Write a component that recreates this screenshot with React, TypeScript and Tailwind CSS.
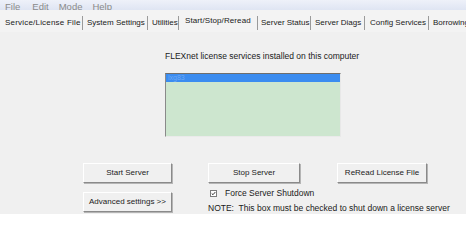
import React from "react"

const menus = [
  { label: "File", ml: "ml-[5px]" },
  { label: "Edit", ml: "ml-[12px]" },
  { label: "Mode", ml: "ml-[10px]" },
  { label: "Help", ml: "ml-[10px]" },
]

// widths measured from separator to separator
const tabs = [
  { label: "Service/License File", cls: "w-[77px] tracking-[0.2px]" },
  { label: "System Settings", cls: "w-[64px] pl-[4px]" },
  { label: "Utilities", cls: "w-[30px] pl-[4px]" },
  { label: "Start/Stop/Reread", cls: "w-[78px] pl-[6px] -mt-[3px] tracking-[0.1px]" },
  { label: "Server Status", cls: "w-[52px] pl-[3px]" },
  { label: "Server Diags", cls: "w-[53px] pl-[4px]" },
  { label: "Config Services", cls: "w-[63px] pl-[5px]" },
  { label: "Borrowing", cls: "pl-[4px]" },
]

function WinButton({ label, className = "" }: { label: string; className?: string }) {
  return (
    <button
      className={`h-[20px] bg-[#f0f0f0] border border-t-white border-l-white border-r-[#8a8a8a] border-b-[#8a8a8a] shadow-[1px_1px_0_#b5b5b5] text-[8px] text-[#222] flex items-center justify-center ${className}`}
    >
      {label}
    </button>
  )
}

export default function App() {
  return (
    <div
      className="w-[466px] h-[214px] overflow-hidden bg-[#f0f0f0] text-[#1a1a1a]"
      style={{ fontFamily: '"Liberation Sans", Arial, sans-serif' }}
    >
      {/* menu bar, top is cut off in the shot */}
      <div className="h-[10px] bg-gradient-to-b from-[#eef1f9] to-[#dfe5f3] flex items-end overflow-hidden">
        {menus.map((m) => (
          <span key={m.label} className={`${m.ml} text-[9.5px] leading-[10px] text-[#8a8a8a] -mb-[2px]`}>
            {m.label}
          </span>
        ))}
      </div>

      {/* tab strip */}
      <div className="h-[22px] pt-[3px] flex items-center pl-[5px] text-[8px] whitespace-nowrap bg-[#f3f3f3] overflow-hidden">
        {tabs.map((t, i) => (
          <React.Fragment key={t.label}>
            <span className={`shrink-0 ${t.cls}`}>{t.label}</span>
            {i < tabs.length - 1 && <span className="inline-block shrink-0 w-px h-[14px] bg-[#9a9a9a]" />}
          </React.Fragment>
        ))}
      </div>

      {/* content */}
      <div className="flex flex-col">
        <div className="pl-[165px] mt-[19px] text-[8.5px] leading-[10px]">
          FLEXnet license services installed on this computer
        </div>

        <div className="ml-[165px] mt-[12px] w-[176px] h-[64px] bg-[#cde6cf] border-t border-t-[#6e6e6e] border-l border-l-[#8a8a8a] border-r border-r-[#e8e8e8] border-b border-b-[#eaeaea]">
          <div className="h-[8px] bg-[#3b8cf0] text-[7px] leading-[8px] text-[#6fa8f3] pl-[2px]">lxg83</div>
        </div>

        <div className="flex mt-[26px] pl-[83px]">
          <WinButton label="Start Server" className="w-[89px]" />
          <WinButton label="Stop Server" className="w-[92px] ml-[36px]" />
          <WinButton label="ReRead License File" className="w-[90px] ml-[37px]" />
        </div>

        <div className="flex mt-[9px] pl-[83px]">
          <WinButton label="Advanced settings >>" className="w-[89px]" />
          <div className="ml-[36px] -mt-[4px] flex flex-col text-[8.5px] leading-[10px]">
            <div className="flex items-center">
              <span className="w-[7px] h-[7px] border border-[#7a7a7a] bg-white flex items-center justify-center ml-[2px]">
                <svg viewBox="0 0 7 7" className="w-[7px] h-[7px]">
                  <path d="M1 3.5 L2.8 5.2 L6 1.5" stroke="#222" strokeWidth="1.3" fill="none" />
                </svg>
              </span>
              <span className="ml-[8px]">Force Server Shutdown</span>
            </div>
            <div className="mt-[5px] whitespace-nowrap">NOTE:&nbsp; This box must be checked to shut down a license server</div>
          </div>
        </div>
      </div>
    </div>
  )
}
